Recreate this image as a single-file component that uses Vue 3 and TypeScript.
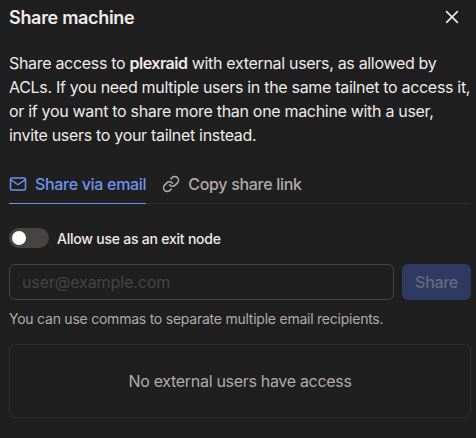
<template>
  <div class="share-dialog">
    <header class="share-dialog__header">
      <h1 class="share-dialog__title">Share machine</h1>
      <button class="share-dialog__close" aria-label="Close" @click="closeHandler">
        <svg width="20" height="20" viewBox="0 0 20 20" fill="none" stroke="currentColor" stroke-width="1.6" stroke-linecap="round">
          <path d="M4.6 4.6l10.8 10.8M15.4 4.6L4.6 15.4" />
        </svg>
      </button>
    </header>

    <p class="share-dialog__description">
      Share access to <strong>{{ machineName }}</strong> with external users, as allowed by ACLs. If you need multiple users in the same tailnet to access it, or if you want to share more than one machine with a user, invite users to your tailnet instead.
    </p>

    <nav class="share-dialog__tabs">
      <button
        v-for="tab in TABS"
        :key="tab.id"
        class="share-dialog__tab"
        :class="{ 'share-dialog__tab--active': tab.id === activeTab }"
        @click="activeTab = tab.id"
      >
        <svg width="18" height="18" viewBox="0 0 24 24" fill="none" stroke="currentColor" stroke-width="2" stroke-linecap="round" stroke-linejoin="round">
          <path v-for="path in tab.paths" :key="path" :d="path" />
        </svg>
        <span>{{ tab.label }}</span>
      </button>
    </nav>

    <label class="share-dialog__exit-node">
      <input v-model="allowExitNode" type="checkbox" class="share-dialog__checkbox" />
      <span class="share-dialog__toggle"></span>
      <span class="share-dialog__exit-label">Allow use as an exit node</span>
    </label>

    <form class="share-dialog__form" @submit.prevent>
      <input v-model="emails" class="share-dialog__input" type="text" placeholder="user@example.com" />
      <button class="share-dialog__submit" type="submit" :disabled="emails === ''">Share</button>
    </form>
    <p class="share-dialog__hint">You can use commas to separate multiple email recipients.</p>

    <div class="share-dialog__empty">No external users have access</div>
  </div>
</template>

<script setup lang="ts">
import { ref } from "vue";

interface Tab {
  id: string;
  label: string;
  paths: string[];
}

const emit = defineEmits<{ close: [] }>();

const TABS: Tab[] = [
  {
    id: "email",
    label: "Share via email",
    paths: [
      "M4 4h16c1.1 0 2 .9 2 2v12c0 1.1-.9 2-2 2H4c-1.1 0-2-.9-2-2V6c0-1.1.9-2 2-2z",
      "M22 6l-10 7L2 6",
    ],
  },
  {
    id: "link",
    label: "Copy share link",
    paths: [
      "M10 13a5 5 0 0 0 7.54.54l3-3a5 5 0 0 0-7.07-7.07l-1.72 1.71",
      "M14 11a5 5 0 0 0-7.54-.54l-3 3a5 5 0 0 0 7.07 7.07l1.71-1.71",
    ],
  },
];

const machineName = ref<string>("plexraid");
const activeTab = ref<string>("email");
const allowExitNode = ref<boolean>(false);
const emails = ref<string>("");

function closeHandler() {
  emit("close");
}
</script>

<style>
body {
  background: #1f1f1f;
}
</style>

<style scoped>
.share-dialog {
  box-sizing: border-box;
  width: 476px;
  height: 438px;
  padding: 5px 5px 0 9px;
  background: #1f1f1f;
  color: #eeebea;
  font-family: Inter, "Liberation Sans", sans-serif;
  font-size: 16px;
  line-height: 24px;
  letter-spacing: -0.31px;
}

button,
input {
  font: inherit;
  letter-spacing: inherit;
}

button {
  padding: 0;
  border: 0;
  background: none;
  color: inherit;
}

.share-dialog__header {
  display: flex;
  justify-content: space-between;
  height: 24px;
}

.share-dialog__title {
  margin: 0;
  font-size: 18px;
  font-weight: 600;
  line-height: 25px;
}

.share-dialog__close {
  display: flex;
  align-items: center;
  margin-right: 9px;
}

.share-dialog__description {
  margin: 22px 0 0;
}

.share-dialog__description strong {
  font-weight: 600;
  letter-spacing: -0.5px;
}

.share-dialog__tabs {
  display: flex;
  gap: 16px;
  height: 32px;
  margin-top: 24px;
  border-bottom: 1px solid #2e2d2d;
}

.share-dialog__tab {
  display: flex;
  gap: 8px;
  height: 33px;
  padding-bottom: 7px;
  box-sizing: border-box;
  align-items: center;
  color: #afacab;
  font-weight: 500;
}

.share-dialog__tab--active {
  border-bottom: 1px solid #6d94ec;
  color: #6d94ec;
}

.share-dialog__exit-node {
  display: flex;
  align-items: center;
  gap: 8px;
  height: 20px;
  margin-top: 24px;
  font-size: 14px;
  font-weight: 500;
  letter-spacing: -0.22px;
}

.share-dialog__exit-label {
  padding-top: 2px;
}

.share-dialog__checkbox {
  display: none;
}

.share-dialog__toggle {
  display: flex;
  box-sizing: border-box;
  width: 40px;
  height: 20px;
  padding: 3px;
  border-radius: 10px;
  background: #454443;
}

.share-dialog__toggle::before {
  content: "";
  width: 14px;
  height: 14px;
  border-radius: 50%;
  background: #fff;
}

.share-dialog__checkbox:checked + .share-dialog__toggle {
  justify-content: flex-end;
  background: #4b70cc;
}

.share-dialog__form {
  display: flex;
  gap: 8px;
  height: 36px;
  margin-top: 16px;
}

.share-dialog__input {
  box-sizing: border-box;
  flex: 1;
  min-width: 0;
  padding: 0 12px;
  border: 1px solid #454443;
  border-radius: 6px;
  outline: none;
  background: #1f1f1f;
  color: #eeebea;
  letter-spacing: -0.1px;
}

.share-dialog__input::placeholder {
  color: #454443;
  opacity: 1;
}

.share-dialog__submit {
  width: 69px;
  border-radius: 6px;
  background: #4b70cc;
  color: #fff;
  font-weight: 500;
}

.share-dialog__submit:disabled {
  background: #2e3a61;
  color: #666c7c;
}

.share-dialog__hint {
  margin: 9px 0 0;
  color: #afacab;
  font-size: 14px;
  line-height: 20px;
  letter-spacing: -0.235px;
}

.share-dialog__empty {
  display: flex;
  align-items: center;
  justify-content: center;
  box-sizing: border-box;
  height: 74px;
  margin-top: 15px;
  border: 1px solid #2e2d2d;
  border-radius: 6px;
  color: #afacab;
}
</style>
